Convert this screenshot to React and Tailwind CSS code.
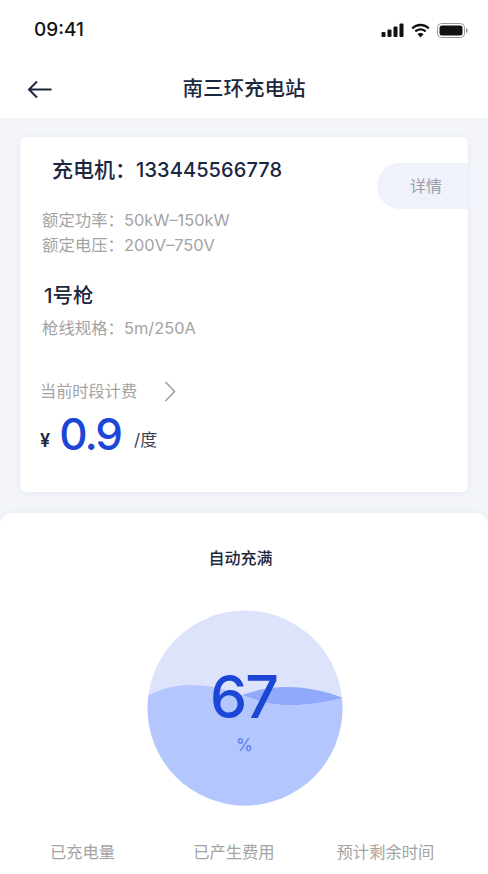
const FONT = 'font-["Inter","Noto_Sans_CJK_SC",sans-serif]';

const StatusIcons = () => (
  <div className="flex items-center gap-[6px]">
    <svg width="23" height="14" viewBox="0 0 23 14" fill="#111">
      <rect x="0.5" y="9" width="4" height="5" rx="1" />
      <rect x="6.5" y="6.5" width="4" height="7.5" rx="1" />
      <rect x="12.5" y="3.5" width="4" height="10.5" rx="1" />
      <rect x="18.5" y="0.5" width="4" height="13.5" rx="1" />
    </svg>
    <svg width="21" height="15" viewBox="0 0 21 15" fill="#111">
      <path d="M10.5 3.2c2.9 0 5.5 1.1 7.5 3l1.6-1.7C17.200 2.200 14 .8 10.500.8S3.800 2.200 1.400 4.500L3 6.200c2-1.900 4.600-3 7.500-3z" />
      <path d="M10.500 7.600c1.700 0 3.200.6 4.400 1.700l1.600-1.700c-1.600-1.500-3.700-2.400-6-2.400s-4.400.9-6 2.400l1.600 1.700c1.200-1.100 2.700-1.700 4.400-1.700z" />
      <path d="M10.500 14.500l3-3.200c-.8-.7-1.900-1.200-3-1.200s-2.200.5-3 1.200z" />
    </svg>
    <svg width="31" height="15" viewBox="0 0 31 15">
      <rect x="0.5" y="0.5" width="27" height="14" rx="4" fill="none" stroke="#9a9a9a" />
      <rect x="2.500" y="2.500" width="23" height="10" rx="2.500" fill="#111" />
      <path d="M29 5v5c1-.3 1.700-1.300 1.700-2.500S30 5.300 29 5z" fill="#9a9a9a" />
    </svg>
  </div>
);

const WaterBall = () => (
  <div className="relative w-[196px] h-[196px]">
    <svg width="196" height="196" viewBox="0 0 196 196">
      <defs>
        <clipPath id="ball">
          <circle cx="98" cy="98" r="97.500" />
        </clipPath>
      </defs>
      <g clipPath="url(#ball)">
        <rect width="196" height="196" fill="#dce3fb" />
        <path d="M95 85C112 79 126 77 140 77C160 77 178 81 196 88C172 94 152 96 135 95C120 94 108 90 95 85Z" fill="#8fa9fb" />
        <path d="M0 86C14 79 27 75 42 75C62 75 78 79 95 85C108 90 120 94 135 95C152 96 172 94 196 88V196H0Z" fill="#b3c6fe" />
      </g>
    </svg>
    <div className="absolute inset-0 flex flex-col items-center">
      <span className="mt-[50px] mr-[2px] text-[59px] leading-[74px] font-[450] tracking-[-2px] text-[#1c46d6]">67</span>
      <span className="mt-[1px] text-[17px] leading-[20px] font-medium text-[#5c82ee]">%</span>
    </div>
  </div>
);

export default function App() {
  return (
    <div className={`${FONT} w-[488px] h-[874px] overflow-hidden flex flex-col bg-[#f3f5fb]`}>
      {/* Status bar + title */}
      <div className="bg-white h-[118px] shrink-0">
        <div className="flex items-center justify-between h-[60px] pl-[34px] pr-[20px]">
          <span className="text-[19px] font-medium text-[#151515]">09:41</span>
          <StatusIcons />
        </div>
        <div className="relative flex items-center justify-center h-[58px]">
          <svg className="absolute left-[27px]" width="25" height="19" viewBox="0 0 25 19" fill="none" stroke="#1c2740" strokeWidth="2">
            <path d="M24.500 9.500H2M10 1.500L2 9.500L10 17.500" />
          </svg>
          <span className="text-[20.500px] font-medium text-[#1c2740]">南三环充电站</span>
        </div>
      </div>

      {/* Charger card */}
      <div className="mx-5 mt-[19px] h-[355px] shrink-0 bg-white rounded-[6px] shadow-[0_1px_6px_rgba(60,80,140,0.08)] flex justify-between">
        <div className="pt-[19px]">
          <p className="pl-[32px] text-[21px] leading-[28px] font-medium text-[#1c2740]">
            充电机：<span className="text-[20px] tracking-[0.1px]">133445566778</span>
          </p>
          <div className="pl-[22px] mt-[24px] text-[16.400px] leading-[25px] text-[#a3a3a3]">
            <p>额定功率：50kW–150kW</p>
            <p>额定电压：200V–750V</p>
          </div>
          <p className="pl-[24px] mt-[24px] text-[20.500px] leading-[28px] font-medium text-[#1c2740]">1号枪</p>
          <p className="pl-[22px] mt-[6px] text-[16.400px] leading-[25px] text-[#a3a3a3]">枪线规格：5m/250A</p>
          <div className="pl-[20px] mt-[38px] flex items-center text-[16.200px] leading-[24px] text-[#a3a3a3]">
            <span>当前时段计费</span>
            <svg className="ml-[27px]" width="12" height="21" viewBox="0 0 12 21" fill="none" stroke="#9ba0ad" strokeWidth="1.600">
              <path d="M1.500 1L10.500 10.500L1.500 20" />
            </svg>
          </div>
          <div className="pl-[20px] mt-[3px] flex items-center text-[#1c2740]">
            <span className="mt-[14px] text-[18px] leading-[24px] font-semibold">¥</span>
            <span className="ml-[9px] text-[44px] leading-[56px] font-[450] tracking-[-2px] text-[#1c46d6]">0.9</span>
            <span className="ml-[13px] mt-[12px] text-[17px] leading-[24px] text-[#3a4254]">/度</span>
          </div>
        </div>
        <div className="self-start mt-[26px] w-[91px] h-[46px] rounded-l-full bg-[#eff1fb] flex items-center pl-[33px] text-[16px] text-[#9a9ea8]">
          详情
        </div>
      </div>

      {/* Charging sheet */}
      <div className="mt-[21px] flex-1 bg-white rounded-t-[12px] shadow-[0_-1px_6px_rgba(60,80,140,0.06)] flex flex-col items-center">
        <p className="mt-[33px] pr-[7px] text-[16px] leading-[24px] font-medium text-[#1c2740]">自动充满</p>
        <div className="mt-[40px] pl-[1px]">
          <WaterBall />
        </div>
        <div className="mt-[34px] w-full flex pl-[50px] text-[16.300px] leading-[24px] text-[#a3a3a3]">
          <span>已充电量</span>
          <span className="ml-[78px]">已产生费用</span>
          <span className="ml-[62px]">预计剩余时间</span>
        </div>
      </div>
    </div>
  );
}
